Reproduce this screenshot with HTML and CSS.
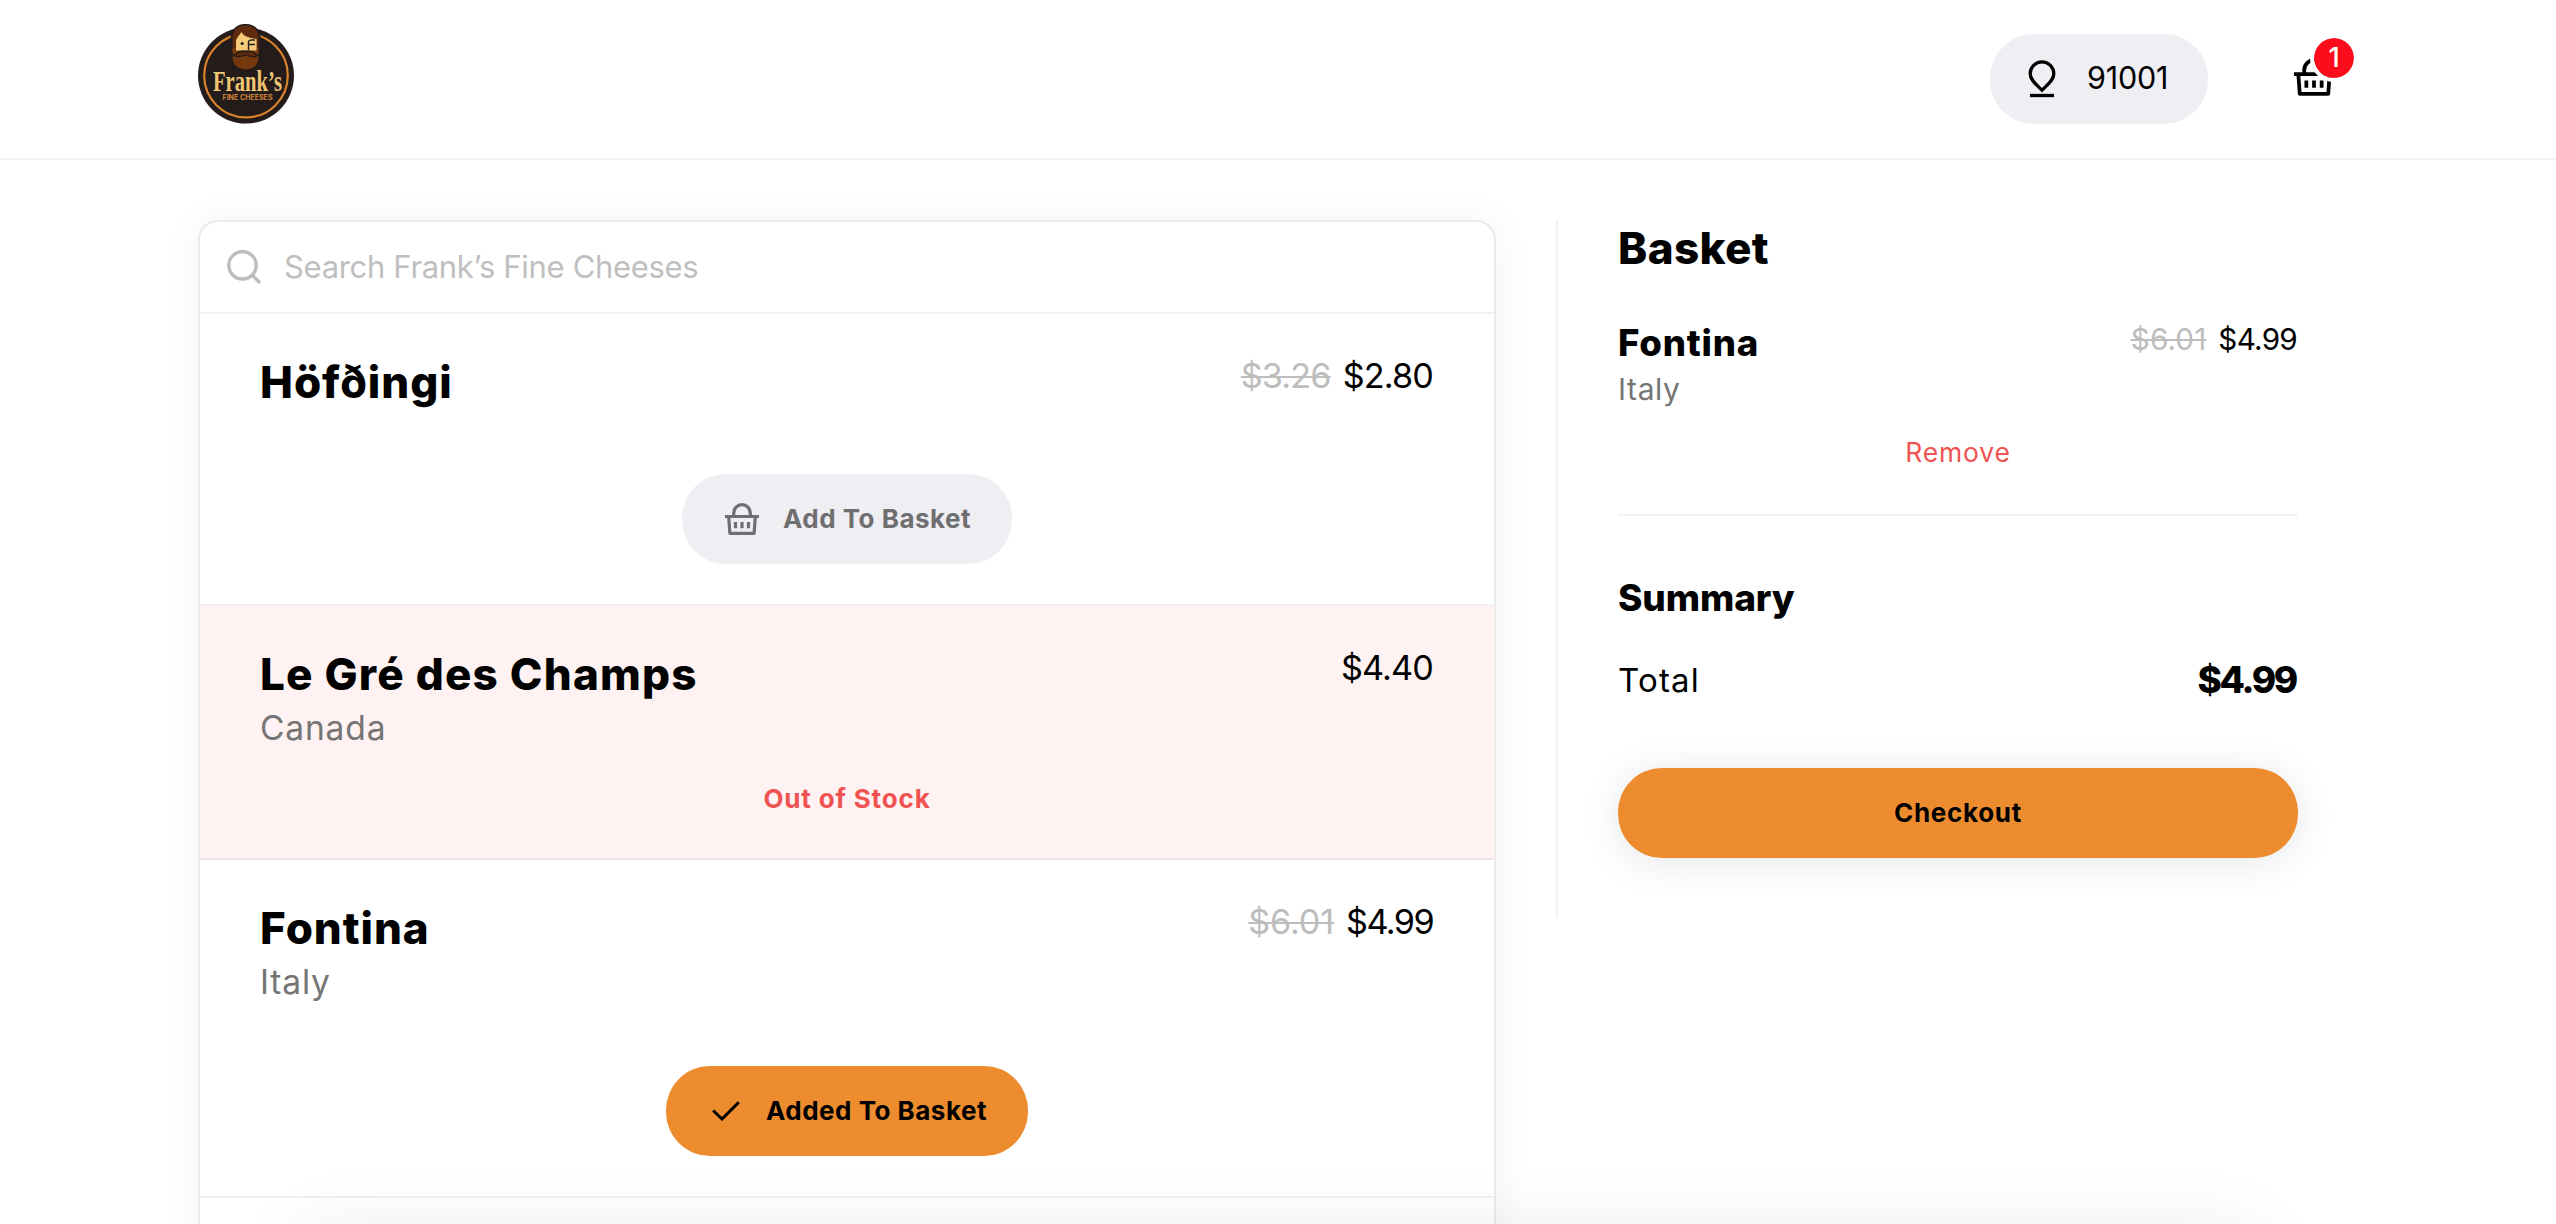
FILE: index.html
```html
<!DOCTYPE html>
<html lang="en">
<head>
<meta charset="utf-8">
<title>Frank's Fine Cheeses</title>
<link rel="stylesheet" href="styles.css">
</head>
<body>
<svg class="sprite" aria-hidden="true">
  <symbol id="basket" viewBox="0 0 34 32">
    <path d="M8.7 13V10.2a8.3 8.5 0 0 1 16.6 0V13" fill="none" stroke="currentColor" stroke-width="3.2"/>
    <path d="M0 13.5H34" stroke="currentColor" stroke-width="3.2"/>
    <path d="M3.7 14L4.9 30.4H29.1L30.3 14" fill="none" stroke="currentColor" stroke-width="3.2" stroke-linejoin="round"/>
    <path d="M10.5 19v6.2M17 19v6.2M23.5 19v6.2" stroke="currentColor" stroke-width="3.2"/>
  </symbol>
</svg>

<header class="header">
  <div class="wrap header-row">
    <svg class="logo" viewBox="0 0 96 100" role="img" aria-label="Frank's Fine Cheeses">
      <circle cx="48" cy="51.6" r="48" fill="#231c1b"/>
      <circle cx="48" cy="51.6" r="41.8" fill="none" stroke="#d9822b" stroke-width="2.2"/>
      <rect x="32.6" y="0" width="30" height="47" rx="14" fill="#231c1b"/>
      <path d="M34.6 14C34.6 6 40 1.6 47.6 1.6S60.6 6 60.6 14V27H34.6z" fill="#5f2b0d"/>
      <path d="M34.6 24H60.6V33C60.6 41 55 45.4 47.6 45.4S34.6 41 34.6 33z" fill="#75390d"/>
      <path d="M38 26.5V18C38 14 41 12 43.5 8C45 12 51 14 58.6 15V26.5z" fill="#f6cb7b"/>
      <path d="M47.8 27.5c-3.4-.6-6.6 0-8.6 1.8-1.4 1.4-3 1.8-4.6 1.7 3 2.3 9.6 2.3 13.2-.4 3.6 2.7 10 2.7 13.2.4-1.6.1-3.2-.3-4.6-1.7-2-1.8-5.2-2.400-8.600-1.800z" fill="#5f2b0d" stroke="#231c1b" stroke-width="1.3"/>
      <circle cx="44.2" cy="19.5" r="1.6" fill="#231c1b"/>
      <path d="M50.5 26V18.5Q50.5 15.8 54 16H57M50.5 20.5H57" fill="none" stroke="#231c1b" stroke-width="1.4"/>
      <text x="15" y="66.500" class="logo-name" textLength="69" lengthAdjust="spacingAndGlyphs">Frank’s</text>
      <text x="24.5" y="76" class="logo-sub" textLength="50" lengthAdjust="spacingAndGlyphs">FINE CHEESES</text>
    </svg>
    <div class="header-actions">
      <button class="zip" type="button">
        <svg class="pin" viewBox="0 0 28 38" fill="none" stroke="#000" stroke-width="3.3">
          <path d="M14 30.2C9 25 2.2 20.5 2.2 13.7A11.8 11.8 0 0 1 25.8 13.7C25.8 20.5 19 25 14 30.2z"/>
          <path d="M2 35.5H26"/>
        </svg>
        <span>91001</span>
      </button>
      <div class="cart">
        <svg class="cart-icon"><use href="#basket"/></svg>
        <span class="badge">1</span>
      </div>
    </div>
  </div>
</header>

<main class="wrap content">
  <section class="card">
    <div class="search">
      <svg class="search-icon" viewBox="0 0 34 34" fill="none" stroke="#bdbdbd" stroke-width="3.4">
        <circle cx="15.5" cy="15.3" r="13.7"/><path d="M25 24.8L33 33"/>
      </svg>
      <span class="placeholder">Search Frank’s Fine Cheeses</span>
    </div>

    <article class="item">
      <div class="item-head">
        <h2 class="item-name">Höfðingi</h2>
        <p class="price"><s>$3.26</s><span>$2.80</span></p>
      </div>
      <button class="btn btn-add no-origin" type="button">
        <svg class="btn-basket"><use href="#basket"/></svg><span>Add To Basket</span>
      </button>
    </article>

    <article class="item item-out">
      <div class="item-head">
        <div>
          <h2 class="item-name wide">Le Gré des Champs</h2>
          <p class="origin">Canada</p>
        </div>
        <p class="price"><span>$4.40</span></p>
      </div>
      <p class="stock">Out of Stock</p>
    </article>

    <article class="item">
      <div class="item-head">
        <div>
          <h2 class="item-name">Fontina</h2>
          <p class="origin">Italy</p>
        </div>
        <p class="price"><s class="loose">$6.01</s><span class="tight">$4.99</span></p>
      </div>
      <button class="btn btn-added" type="button">
        <svg class="check" viewBox="0 0 28 20" fill="none" stroke="#000" stroke-width="3"><path d="M1.2 9.5L10 18L26.8 1.2"/></svg><span>Added To Basket</span>
      </button>
    </article>
    <div class="item"></div>
  </section>

  <aside class="aside">
    <h2 class="aside-title">Basket</h2>
    <div class="line">
      <div class="line-head">
        <div>
          <h3 class="line-name">Fontina</h3>
          <p class="line-origin">Italy</p>
        </div>
        <p class="line-price"><s class="loose">$6.01</s><span>$4.99</span></p>
      </div>
      <p class="remove">Remove</p>
    </div>
    <h3 class="summary-title">Summary</h3>
    <div class="total">
      <span class="total-label">Total</span>
      <strong class="total-value">$4.99</strong>
    </div>
    <button class="checkout" type="button">Checkout</button>
  </aside>
</main>
<div class="sheet"></div>
</body>
</html>
```
FILE: styles.css
```css
* { box-sizing: border-box; }
html, body { height: 100%; overflow: hidden; }
body { margin: 0; background: #fff; color: #000; font-family: Inter, "Open Sans", sans-serif; }
h2, h3, p { margin: 0; font-weight: 800; }
p { font-weight: 400; }
button { border: 0; padding: 0; color: inherit; font: inherit; }
svg { flex: none; display: block; }
.sprite { position: absolute; width: 0; height: 0; }
.wrap { margin: 0 198px; }

.header { height: 160px; border-bottom: 2px solid #f2f2f2; }
.header-row { height: 158px; display: flex; align-items: center; justify-content: space-between; }
.logo { width: 96px; height: 100px; margin-top: -10px; overflow: visible; }
.logo-name { font: 700 29px "Liberation Serif", serif; fill: #f0c674; }
.logo-sub { font: 700 7px Inter, sans-serif; fill: #d08238; }
.header-actions { display: flex; align-items: center; gap: 86px; margin-right: 24px; }
.zip {
  display: flex; align-items: center; width: 218px; height: 90px; padding-left: 38px; gap: 31px;
  border-radius: 44px; background: #efeef3; font-size: 30.5px; letter-spacing: -.2px;
}
.zip span { margin-top: -3px; }
.pin { width: 28px; height: 38px; }
.cart { position: relative; margin-top: -4px; }
.cart-icon { width: 40px; height: 38px; }
.badge {
  position: absolute; left: 16px; top: -24px; width: 48px; height: 48px; border: 4px solid #fff; border-radius: 50%;
  background: #fd0d1b; background-clip: padding-box; color: #fff; text-align: center;
  font: 500 27px/40px Inter, sans-serif;
}

.content { margin-top: 60px; display: flex; align-items: flex-start; gap: 60px; }
.card {
  width: 1298px; flex: none; border: 2px solid #ebebeb; border-radius: 20px; overflow: hidden;
  box-shadow: 0 0 40px rgba(0, 0, 0, .05);
}
.search { height: 92px; display: flex; align-items: center; padding-left: 27px; gap: 23px; border-bottom: 2px solid #f2f2f2; }
.search-icon { width: 34px; height: 34px; }
.placeholder { margin-top: -1px; font-size: 31px; letter-spacing: -.32px; color: #bfbfbf; }

.item { padding: 42px 60px 40px; border-bottom: 2px solid rgba(0, 0, 0, .055); }
.item-out { background: #fff2f2; padding-bottom: 43px; }
.item-head { display: flex; justify-content: space-between; align-items: flex-start; }
.item-name { font-size: 44px; line-height: 52px; letter-spacing: .95px; }
.item-name.wide { letter-spacing: 1.2px; }
.origin { margin-top: 6px; font-size: 33.6px; line-height: 44px; letter-spacing: .8px; color: #757575; }
.price { display: flex; gap: 12px; margin-right: 1px; font-size: 34.2px; line-height: 40px; letter-spacing: -.85px; }
.price .tight { letter-spacing: -1.6px; }
s { color: #bdbdbd; text-decoration-thickness: 2px; }
.price .loose { letter-spacing: -.1px; }
.btn {
  display: flex; align-items: center; height: 90px; margin: 62px auto 0; border-radius: 44px;
  font-size: 26px; font-weight: 700; letter-spacing: .5px;
}
.btn span { margin-top: -2px; }
.no-origin { margin-top: 66px; }
.btn-add { width: 330px; padding-left: 43px; gap: 24px; background: #efeef3; color: #6f6f71; }
.btn-basket { width: 34px; height: 32px; }
.btn-added { width: 362px; padding-left: 46px; gap: 26px; background: #ed8c2e; }
.check { width: 28px; height: 20px; }
.stock { margin-top: 33px; text-align: center; font-size: 26px; line-height: 32px; font-weight: 700; letter-spacing: .85px; color: #ef5352; }

.aside { flex: 1; height: 698px; padding: 2px 60px 0; border-left: 2px solid #f2f2f2; }
.aside-title { font-size: 44px; line-height: 52px; letter-spacing: .4px; }
.line { margin-top: 47px; padding-bottom: 45px; border-bottom: 2px solid #f2f2f2; }
.line-head { display: flex; justify-content: space-between; align-items: flex-start; }
.line-name { font-size: 36.6px; line-height: 44px; letter-spacing: .8px; }
.line-origin { margin-top: 6px; font-size: 30px; line-height: 36px; letter-spacing: .6px; color: #757575; }
.line-price { display: flex; gap: 12px; margin-right: 1px; font-size: 29.7px; line-height: 36px; letter-spacing: -.75px; }
.line-price .loose { letter-spacing: .1px; }
.remove { margin-top: 29px; padding-bottom: 1px; text-align: center; font-size: 26.5px; line-height: 32px; letter-spacing: .8px; color: #ef5352; }
.summary-title { margin-top: 60px; font-size: 37px; line-height: 44px; letter-spacing: -.1px; }
.total { display: flex; justify-content: space-between; align-items: center; height: 44px; margin-top: 38px; }
.total-label { font-size: 33px; line-height: 40px; letter-spacing: 1.2px; }
.total-value { margin-right: 2px; font-size: 37px; font-weight: 800; line-height: 44px; letter-spacing: -2.3px; }
.checkout {
  display: block; width: 100%; height: 90px; margin-top: 66px; padding-bottom: 2px; border-radius: 44px; background: #ed8c2e;
  box-shadow: 0 4px 40px rgba(0, 0, 0, .1); font-size: 26px; font-weight: 700; letter-spacing: .7px;
}
.sheet { position: fixed; left: 300px; right: 300px; top: 1236px; height: 200px; box-shadow: 0 0 80px rgba(0, 0, 0, .09); }
```
